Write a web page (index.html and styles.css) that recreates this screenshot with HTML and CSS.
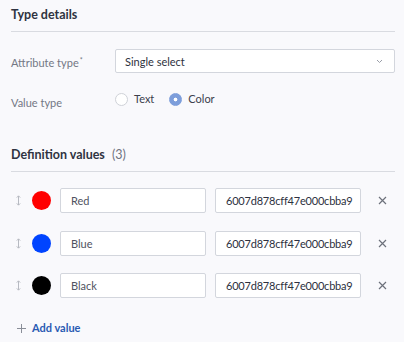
FILE: index.html
```html
<!DOCTYPE html>
<html>
  <head>
    <meta charset="utf-8">
    <title>Type details</title>
    <link rel="stylesheet" href="styles.css">
  </head>
  <body>
    <div class="panel">
      <h2 class="sectionTitle">Type details</h2>

      <div class="field">
        <label class="fieldLabel">Attribute type<sup>*</sup></label>
        <div class="select">
          <span>Single select</span>
          <svg class="chevron" width="7" height="5" viewBox="0 0 7 5">
            <path d="M1 1 L3.5 3.5 L6 1" fill="none" stroke="#9a9ea8" stroke-width="1"/>
          </svg>
        </div>
      </div>

      <div class="field fieldRadio">
        <label class="fieldLabel lowered">Value type</label>
        <div class="radios">
          <span class="radio"><span class="dot"></span>Text</span>
          <span class="radio"><span class="dot checked"></span>Color</span>
        </div>
      </div>

      <h2 class="sectionTitle second">Definition values <span class="count">(3)</span></h2>

      <div class="values">
        <div class="valueRow">
          <svg class="drag" width="5" height="11" viewBox="0 0 5 11">
            <path d="M2.5 1 V10 M0.8 2.6 L2.5 0.8 L4.2 2.6 M0.8 8.4 L2.5 10.2 L4.2 8.4" fill="none" stroke="#b7bac2" stroke-width="1"/>
          </svg>
          <span class="swatch" style="background: #ff0000"></span>
          <div class="input name">Red</div>
          <div class="input hex">6007d878cff47e000cbba9</div>
          <svg class="remove" width="9" height="9" viewBox="0 0 9 9">
            <path d="M1 1 L8 8 M8 1 L1 8" stroke="#6d717b" stroke-width="1.2"/>
          </svg>
        </div>
        <div class="valueRow">
          <svg class="drag" width="5" height="11" viewBox="0 0 5 11">
            <path d="M2.5 1 V10 M0.8 2.6 L2.5 0.8 L4.2 2.6 M0.8 8.4 L2.5 10.2 L4.2 8.4" fill="none" stroke="#b7bac2" stroke-width="1"/>
          </svg>
          <span class="swatch" style="background: #0044ff"></span>
          <div class="input name">Blue</div>
          <div class="input hex">6007d878cff47e000cbba9</div>
          <svg class="remove" width="9" height="9" viewBox="0 0 9 9">
            <path d="M1 1 L8 8 M8 1 L1 8" stroke="#6d717b" stroke-width="1.2"/>
          </svg>
        </div>
        <div class="valueRow">
          <svg class="drag" width="5" height="11" viewBox="0 0 5 11">
            <path d="M2.5 1 V10 M0.8 2.6 L2.5 0.8 L4.2 2.6 M0.8 8.4 L2.5 10.2 L4.2 8.4" fill="none" stroke="#b7bac2" stroke-width="1"/>
          </svg>
          <span class="swatch" style="background: #000000"></span>
          <div class="input name">Black</div>
          <div class="input hex">6007d878cff47e000cbba9</div>
          <svg class="remove" width="9" height="9" viewBox="0 0 9 9">
            <path d="M1 1 L8 8 M8 1 L1 8" stroke="#6d717b" stroke-width="1.2"/>
          </svg>
        </div>
      </div>

      <a class="addValue" href="#">
        <svg width="9" height="9" viewBox="0 0 9 9">
          <path d="M4.5 0 V9 M0 4.5 H9" stroke="#8a8e98" stroke-width="1"/>
        </svg>
        Add value
      </a>
    </div>
  </body>
</html>
```

FILE: styles.css
```css
body {
  margin: 0;
  background-color: #f9f9fc;
  font-family: Lato, "Open Sans", sans-serif;
  color: #2d3140;
}

.panel {
  padding: 0 9px 0 11px;
}

.sectionTitle {
  margin: 0;
  padding: 7px 0 8px;
  font-size: 12.5px;
  line-height: 16px;
  font-weight: 700;
  color: #2f3341;
  border-bottom: 1px solid #d9dbe1;
}

.sectionTitle.second {
  margin-top: 29px;
}

.count {
  margin-left: 4px;
  font-weight: 400;
  color: #6f7380;
}

.field {
  display: flex;
  align-items: center;
  margin-top: 17px;
}

.fieldRadio {
  align-items: flex-start;
  margin-top: 18px;
}

.fieldLabel {
  width: 104px;
  flex-shrink: 0;
  font-size: 11px;
  line-height: 16px;
  color: #737784;
}

.fieldLabel sup {
  font-size: 7px;
  vertical-align: 4px;
  margin-left: 1px;
}

.fieldLabel.lowered {
  padding-top: 4px;
}

.select {
  flex: 1;
  height: 22px;
  display: flex;
  align-items: center;
  justify-content: space-between;
  padding: 0 11px 0 9px;
  background-color: #fff;
  border: 1px solid #d3d6dd;
  border-radius: 2px;
  font-size: 11px;
  color: #2d3140;
}

.radios {
  display: flex;
  gap: 15px;
  font-size: 11px;
  line-height: 16px;
  color: #3c404c;
}

.radio {
  display: flex;
  align-items: center;
  gap: 6px;
}

.dot {
  width: 11px;
  height: 11px;
  border: 1px solid #cfd2d8;
  border-radius: 50%;
  background-color: #fff;
}

.dot.checked {
  border-color: #7d9edb;
  background: radial-gradient(circle, #fff 0, #fff 1.6px, #7d9edb 2.2px);
}

.values {
  display: flex;
  flex-direction: column;
  gap: 17.5px;
  margin-top: 16px;
}

.valueRow {
  display: flex;
  align-items: center;
  height: 25px;
}

.drag {
  margin-left: 5px;
  flex-shrink: 0;
}

.swatch {
  width: 19px;
  height: 19px;
  margin-left: 11px;
  border-radius: 50%;
  flex-shrink: 0;
}

.input {
  width: 124px;
  height: 23px;
  line-height: 23px;
  padding: 0 10px;
  margin-left: 9px;
  background-color: #fff;
  border: 1px solid #d3d6dd;
  border-radius: 2px;
  font-size: 11px;
  color: #2d3140;
  white-space: nowrap;
  overflow: hidden;
}

.input.name {
  color: #4f5361;
}

.input.hex {
  letter-spacing: -0.2px;
}

.remove {
  margin-left: 17px;
}

.addValue {
  display: inline-flex;
  align-items: center;
  gap: 6px;
  margin: 22px 0 0 6px;
  font-size: 11px;
  line-height: 16px;
  font-weight: 700;
  color: #2a5bb3;
  text-decoration: none;
}
```
